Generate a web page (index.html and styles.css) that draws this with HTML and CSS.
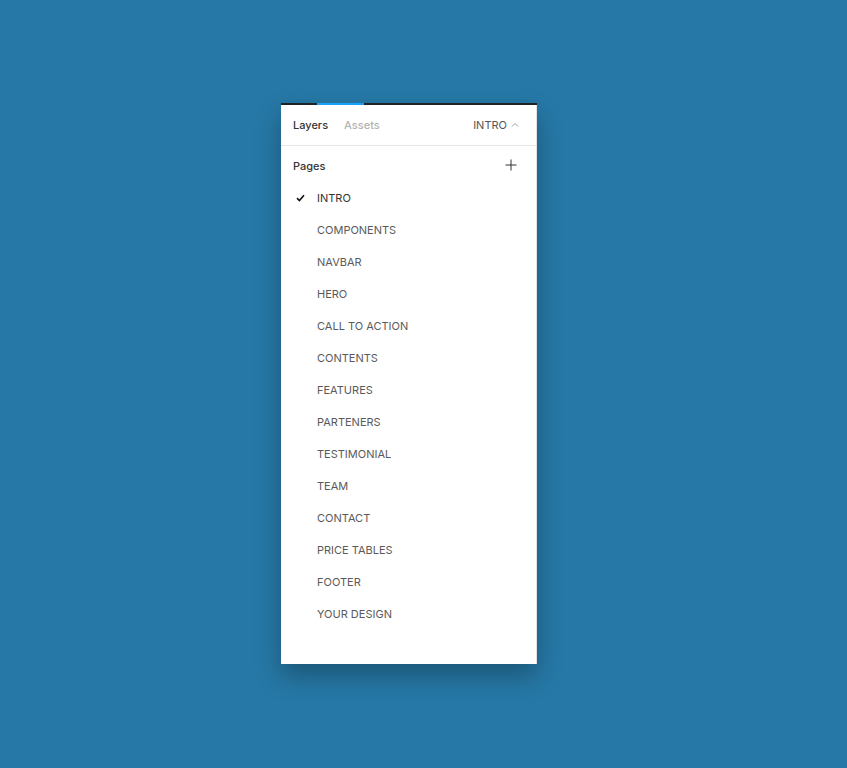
FILE: index.html
```html
<!DOCTYPE html>
<html>
<head>
<meta charset="utf-8">
<link rel="stylesheet" href="styles.css">
</head>
<body>
<div class="stage">
  <div class="panel">
    <div class="topbar"><span class="indicator"></span></div>
    <div class="tabs">
      <span class="tab active">Layers</span>
      <span class="tab muted">Assets</span>
      <span class="page-select">INTRO
        <svg class="caret" width="8" height="5" viewBox="0 0 8 5"><path d="M1 4.5 L4 1.5 L7 4.5" fill="none" stroke="#999" stroke-width="1"/></svg>
      </span>
    </div>
    <div class="pages">
      <div class="pages-head">
        <span>Pages</span>
        <svg class="plus" width="12" height="12" viewBox="0 0 12 12"><path d="M6 0.5 V11.5 M0.5 6 H11.5" stroke="#333" stroke-width="1"/></svg>
      </div>
      <ul class="list">
        <li class="item current"><svg class="check" width="9" height="8" viewBox="0 0 9 8"><path d="M1 4.2 L3.4 6.5 L8 1.2" fill="none" stroke="#111" stroke-width="1.6"/></svg>INTRO</li>
        <li class="item">COMPONENTS</li>
        <li class="item">NAVBAR</li>
        <li class="item">HERO</li>
        <li class="item">CALL TO ACTION</li>
        <li class="item">CONTENTS</li>
        <li class="item">FEATURES</li>
        <li class="item">PARTENERS</li>
        <li class="item">TESTIMONIAL</li>
        <li class="item">TEAM</li>
        <li class="item">CONTACT</li>
        <li class="item">PRICE TABLES</li>
        <li class="item">FOOTER</li>
        <li class="item">YOUR DESIGN</li>
      </ul>
    </div>
  </div>
</div>
</body>
</html>
```

FILE: styles.css
```css
html, body {
  margin: 0;
  padding: 0;
  background: #2678a6;
  font-family: Inter, "Noto Sans", sans-serif;
}
.stage {
  height: 768px;
  padding-top: 103px;
  padding-left: 281px;
  box-sizing: border-box;
}
.panel {
  width: 256px;
  height: 561px;
  background: #fff;
  box-sizing: border-box;
  border-right: 1px solid #e2e2e2;
  box-shadow: 0 12px 24px rgba(0, 0, 0, 0.28);
  display: flex;
  flex-direction: column;
}
.topbar {
  height: 2px;
  background: #1f2326;
  margin-right: -1px;
  padding-left: 36px;
}
.indicator {
  display: block;
  width: 47px;
  height: 2px;
  background: #18a0fb;
}
.tabs {
  height: 40px;
  display: flex;
  align-items: center;
  padding: 0 17px 0 12px;
  border-bottom: 1px solid #e5e5e5;
  font-size: 11px;
}
.tab {
  margin-right: 16px;
  font-weight: 500;
}
.tab.active { color: #333; }
.tab.muted { color: #b3b3b3; }
.page-select {
  margin-left: auto;
  color: #555;
  display: flex;
  align-items: center;
  gap: 4px;
}
.caret { margin-top: -2px; }
.pages {
  padding-top: 4px;
}
.pages-head {
  height: 32px;
  display: flex;
  align-items: center;
  justify-content: space-between;
  padding: 0 19px 0 12px;
  font-size: 11px;
  font-weight: 500;
  color: #333;
}
.plus { margin-top: -2px; }
.list {
  list-style: none;
  margin: 0;
  padding: 0;
}
.item {
  height: 32px;
  display: flex;
  align-items: center;
  padding-left: 36px;
  font-size: 11px;
  color: #5a5a5a;
  position: relative;
}
.item.current { color: #333; }
.check {
  position: absolute;
  left: 15px;
  top: 12px;
}
```
